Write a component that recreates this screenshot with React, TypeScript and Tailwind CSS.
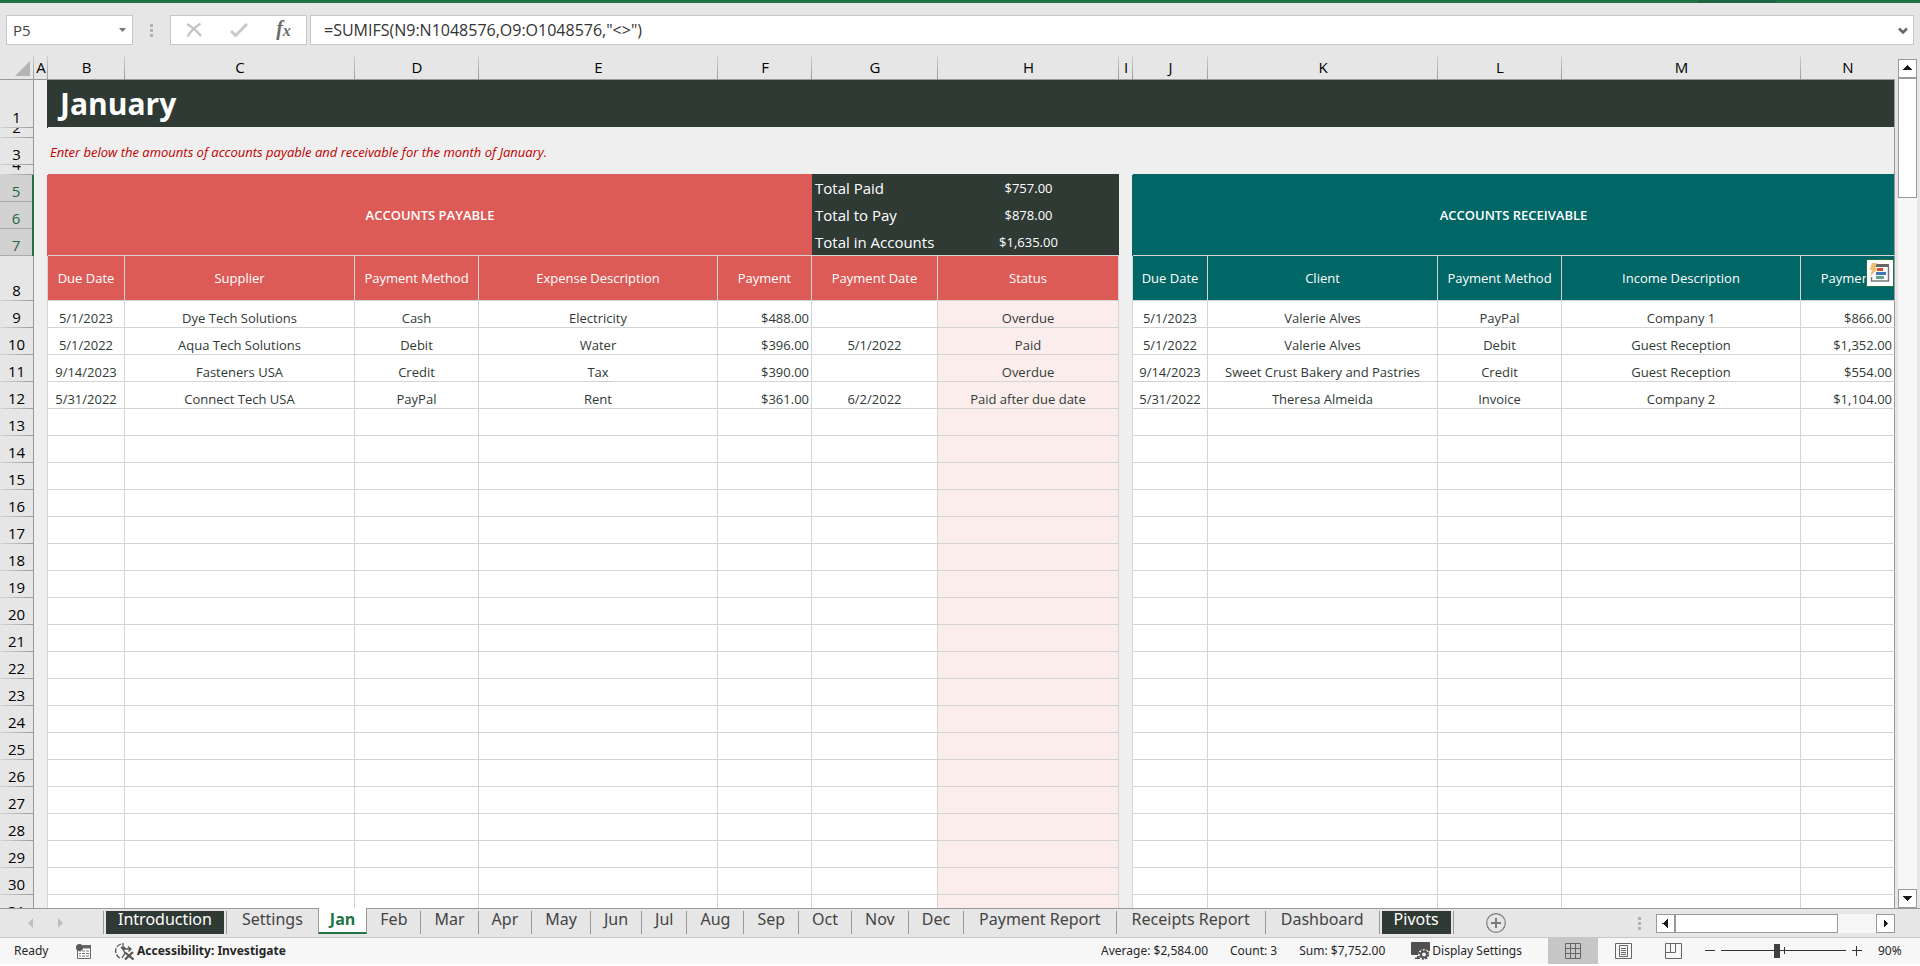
import React, { useState } from 'react';

type Cells = string[];

const columns = [
  { id: 'A', width: 'w-[14px]' },
  { id: 'B', width: 'w-[77px]' },
  { id: 'C', width: 'w-[230px]' },
  { id: 'D', width: 'w-[124px]' },
  { id: 'E', width: 'w-[239px]' },
  { id: 'F', width: 'w-[94px]' },
  { id: 'G', width: 'w-[126px]' },
  { id: 'H', width: 'w-[181px]' },
  { id: 'I', width: 'w-[14px]' },
  { id: 'J', width: 'w-[75px]' },
  { id: 'K', width: 'w-[230px]' },
  { id: 'L', width: 'w-[124px]' },
  { id: 'M', width: 'w-[239px]' },
  { id: 'N', width: '' },
];

const payableHead = ['Due Date', 'Supplier', 'Payment Method', 'Expense Description', 'Payment', 'Payment Date', 'Status'];
const receivableHead = ['Due Date', 'Client', 'Payment Method', 'Income Description', 'Payment'];

const payable: Cells[] = [
  ['5/1/2023', 'Dye Tech Solutions', 'Cash', 'Electricity', '$488.00', '', 'Overdue'],
  ['5/1/2022', 'Aqua Tech Solutions', 'Debit', 'Water', '$396.00', '5/1/2022', 'Paid'],
  ['9/14/2023', 'Fasteners USA', 'Credit', 'Tax', '$390.00', '', 'Overdue'],
  ['5/31/2022', 'Connect Tech USA', 'PayPal', 'Rent', '$361.00', '6/2/2022', 'Paid after due date'],
];

const receivable: Cells[] = [
  ['5/1/2023', 'Valerie Alves', 'PayPal', 'Company 1', '$866.00'],
  ['5/1/2022', 'Valerie Alves', 'Debit', 'Guest Reception', '$1,352.00'],
  ['9/14/2023', 'Sweet Crust Bakery and Pastries', 'Credit', 'Guest Reception', '$554.00'],
  ['5/31/2022', 'Theresa Almeida', 'Invoice', 'Company 2', '$1,104.00'],
];

const emptyPayable: Cells = ['', '', '', '', '', '', ''];
const emptyReceivable: Cells = ['', '', '', '', ''];

const tabs = [
  'Introduction', 'Settings', 'Jan', 'Feb', 'Mar', 'Apr', 'May', 'Jun', 'Jul', 'Aug', 'Sep',
  'Oct', 'Nov', 'Dec', 'Payment Report', 'Receipts Report', 'Dashboard', 'Pivots',
];
const darkTabs = ['Introduction', 'Pivots'];
const wideTabs = ['Settings', 'Payment Report', 'Receipts Report', 'Dashboard'];

const RowHead = ({ n, h, selected = false }: { n: number; h: string; selected?: boolean }) => (
  <th
    scope="row"
    className={`relative p-0 align-bottom font-normal text-[15px] leading-5 ${h} ${
      selected ? 'bg-[#d2d2d2] text-[#1e6a41] border-r-2 border-[#217346]' : 'bg-[#e6e6e6] text-black border-r border-[#999999]'
    }`}
  >
    <div className={`flex items-end justify-center overflow-hidden pb-px ${h}`}>{n}</div>
    <div className={`absolute bottom-0 left-0 right-0 h-px ${selected ? 'bg-[#ababab]' : 'bg-linear-to-r from-[#d8d8d8] to-[#999999]'}`} />
  </th>
);

const Dots = () => (
  <div className="flex flex-col gap-[2px]">
    <i className="size-[3px] bg-[#b1b1b1]" />
    <i className="size-[3px] bg-[#b1b1b1]" />
    <i className="size-[3px] bg-[#b1b1b1]" />
  </div>
);

const arrows = {
  up: 'M5 11h9L9.500 6z',
  down: 'M5 7h9l-4.500 5z',
  left: 'M11.500 5v9L6.500 9.500z',
  right: 'M7.500 5v9l5-4.500z',
};

const ScrollButton = ({ dir }: { dir: keyof typeof arrows }) => (
  <button aria-label={`Scroll ${dir}`} className="size-[19px] shrink-0 bg-white outline outline-1 -outline-offset-1 outline-[#999999]">
    <svg viewBox="0 0 19 19" className="size-[19px]" shapeRendering="crispEdges">
      <path d={arrows[dir]} fill="#1a1a1a" />
    </svg>
  </button>
);

const FormulaBar = () => (
  <div className="flex items-center gap-[3px] px-[6px] pt-[12px] pb-[10px] text-[#444444]">
    <div className="flex h-[30px] w-[127px] items-center border border-[#c6c6c6] bg-white">
      <input aria-label="Name Box" defaultValue="P5" className="min-w-0 flex-1 bg-transparent pl-[6px] text-[15px] outline-none" />
      <button aria-label="Open name list" className="flex h-full w-5 items-center justify-center">
        <svg viewBox="0 0 7 4" className="h-[4px] w-[7px]"><path d="M0 0h7L3.500 4z" fill="#73777b" /></svg>
      </button>
    </div>
    <div className="flex w-[31px] justify-center"><Dots /></div>
    <div className="flex h-[30px] w-[137px] items-center border border-[#c6c6c6] bg-white">
      <button aria-label="Cancel" className="flex flex-1 justify-center">
        <svg viewBox="0 0 16 14" className="h-[14px] w-4"><path d="M1 1c5 3 10 7 14 12M14.500.500C9 4 4 9 1.500 13.500" fill="none" stroke="#c4c4c4" strokeWidth="2.200" /></svg>
      </button>
      <button aria-label="Enter" className="flex flex-1 justify-center">
        <svg viewBox="0 0 18 14" className="h-[14px] w-[18px]"><path d="M1 8l4.500 4.500L17 1" fill="none" stroke="#c9c9c9" strokeWidth="3" /></svg>
      </button>
      <button aria-label="Insert Function" className="flex flex-1 justify-center pb-[2px] font-['Liberation_Serif',serif] text-[20px] leading-6 font-bold italic text-[#6b6b6b]">
        f<span className="pt-[3px] text-[16px]">x</span>
      </button>
    </div>
    <div className="flex h-[30px] min-w-0 flex-1 items-center border border-[#c6c6c6] bg-white">
      <input
        aria-label="Formula Bar"
        defaultValue={'=SUMIFS(N9:N1048576,O9:O1048576,"<>")'}
        className="min-w-0 flex-1 bg-transparent pl-[13px] text-[16px] text-[#333333] outline-none"
      />
      <button aria-label="Expand Formula Bar" className="flex h-full w-5 items-center justify-center">
        <svg viewBox="0 0 10 7" className="h-[7px] w-[10px]"><path d="M1 1.500l4 4 4-4" fill="none" stroke="#666666" strokeWidth="2.500" /></svg>
      </button>
    </div>
  </div>
);

const QuickAnalysis = () => (
  <button aria-label="Quick Analysis" className="absolute top-[3px] right-0 size-[28px] border border-[#217346] bg-white">
    <svg viewBox="0 0 26 26" className="size-[26px]">
      <path d="M8 4h14v3H8z" fill="#666666" />
      <path d="M21.500 6v15h-17v-4" fill="none" stroke="#777777" strokeWidth="1.500" />
      <path d="M10 8h6v3h-6z" fill="#d6492a" />
      <path d="M9 12h10v3H9z" fill="#3f79b5" />
      <path d="M9 16h8v3H9z" fill="#62a58c" />
      <path d="M5 3h5L8 8h3l-8 9 2-7H2.500z" fill="#ecc06c" />
    </svg>
  </button>
);

const Sheet = () => (
  <table className="w-full table-fixed border-separate border-spacing-0 text-[13px] leading-[18px] text-[#303a35]">
    <colgroup>
      <col className="w-[34px]" />
      {columns.map((c) => <col key={c.id} className={c.width} />)}
    </colgroup>
    <thead>
      <tr className="h-[25px] text-[15px] leading-5 text-black">
        <th className="relative border-b border-[#999999] p-0">
          <svg viewBox="0 0 15 15" className="absolute right-[4px] bottom-[3px] size-[15px]"><path d="M15 0v15H0z" fill="#b4b4b4" /></svg>
          <div className="absolute right-0 bottom-0 h-[23px] w-px bg-linear-to-b from-[#d0d0d0] to-[#999999]" />
        </th>
        {columns.map((c) => (
          <th key={c.id} scope="col" className="relative border-b border-[#999999] p-0 font-normal">
            {c.id}
            {c.id !== 'N' && <div className="absolute right-0 bottom-0 h-[23px] w-px bg-linear-to-b from-[#d0d0d0] to-[#999999]" />}
          </th>
        ))}
      </tr>
    </thead>
    <tbody>
      <tr>
        <RowHead n={1} h="h-[48px]" />
        <td className="border-r border-[#303a35] p-0" />
        <td colSpan={13} className="border-r border-b border-r-[#999999] border-b-[#efefef] bg-[#303a35] p-0 pl-3">
          <h1 className="text-[30px] leading-10 font-bold text-white">January</h1>
        </td>
      </tr>
      <tr>
        <RowHead n={2} h="h-[10px]" />
        <td colSpan={14} className="border-r border-[#999999] p-0" />
      </tr>
      <tr>
        <RowHead n={3} h="h-[27px]" />
        <td />
        <td colSpan={13} className="border-r border-[#999999] p-0 pl-[2px] text-[13px] italic text-[#c00000]">
          Enter below the amounts of accounts payable and receivable for the month of January.
        </td>
      </tr>
      <tr>
        <RowHead n={4} h="h-[10px]" />
        <td />
        <td colSpan={5} className="border-b border-[#dc5b57] p-0" />
        <td colSpan={2} className="border-b border-[#303a35] p-0" />
        <td />
        <td colSpan={5} className="border-r border-b border-r-[#999999] border-b-[#006666] p-0" />
      </tr>
      {[
        ['Total Paid', '$757.00'],
        ['Total to Pay', '$878.00'],
        ['Total in Accounts', '$1,635.00'],
      ].map(([label, value], i) => (
        <tr key={label} className="text-white">
          <RowHead n={5 + i} h="h-[27px]" selected />
          <td className="border-r border-[#dc5b57] p-0" />
          {i === 0 && (
            <td rowSpan={3} colSpan={5} className="border-b border-[#d4d4d4] bg-[#dc5b57] p-0 text-center font-semibold">
              ACCOUNTS PAYABLE
            </td>
          )}
          <td className={`border-b bg-[#303a35] p-0 pl-[3px] text-[15px] leading-5 whitespace-nowrap ${i === 2 ? 'border-[#d4d4d4]' : 'border-[#303a35]'}`}>{label}</td>
          <td className={`border-b bg-[#303a35] p-0 text-center ${i === 2 ? 'border-[#d4d4d4]' : 'border-[#303a35]'}`}>{value}</td>
          <td className="border-r border-[#006666] p-0" />
          {i === 0 && (
            <td rowSpan={3} colSpan={5} className="border-r border-b border-r-[#999999] border-b-[#d4d4d4] bg-[#006666] p-0 text-center font-semibold">
              ACCOUNTS RECEIVABLE
            </td>
          )}
        </tr>
      ))}
      <tr className="text-white">
        <RowHead n={8} h="h-[45px]" />
        <td className="border-r border-[#d4d4d4] p-0" />
        {payableHead.map((t) => (
          <td key={t} className="border-r border-b border-[#d4d4d4] bg-[#dc5b57] p-0 text-center whitespace-nowrap">{t}</td>
        ))}
        <td className="border-r border-[#d4d4d4] p-0" />
        {receivableHead.map((t, i) => (
          <td key={t} className={`relative border-r border-b border-b-[#d4d4d4] bg-[#006666] p-0 text-center whitespace-nowrap ${i === 4 ? 'border-r-[#999999]' : 'border-r-[#d4d4d4]'}`}>
            {t}
            {i === 4 && <QuickAnalysis />}
          </td>
        ))}
      </tr>
      {Array.from({ length: 40 }, (_, r) => (
        <tr key={r}>
          <RowHead n={9 + r} h="h-[27px]" />
          <td className="border-r border-[#d4d4d4] p-0" />
          {(payable[r] ?? emptyPayable).map((t, i) => (
            <td
              key={i}
              className={`border-r border-b border-[#d4d4d4] p-0 align-bottom whitespace-nowrap ${i === 4 ? 'pr-[2px] text-right' : 'text-center'} ${
                i === 6 ? 'bg-[#fceded]' : 'bg-white'
              }`}
            >
              {t}
            </td>
          ))}
          <td className="border-r border-[#d4d4d4] p-0" />
          {(receivable[r] ?? emptyReceivable).map((t, i) => (
            <td
              key={i}
              className={`border-r border-b border-b-[#d4d4d4] bg-white p-0 align-bottom whitespace-nowrap ${
                i === 4 ? 'border-r-[#999999] pr-[2px] text-right' : 'border-r-[#d4d4d4] text-center'
              }`}
            >
              {t}
            </td>
          ))}
        </tr>
      ))}
    </tbody>
  </table>
);

const SheetTabs = () => {
  const [active, setActive] = useState('Jan');

  return (
    <div className="flex h-[30px] shrink-0 border-b border-[#c6c6c6] font-['Noto_Sans',sans-serif] text-[16px] leading-4 text-[#444444]">
      <div className="flex w-[103px] shrink-0 items-center gap-[25px] border-t border-[#999999] pl-[28px]">
        <button aria-label="Previous sheet"><svg viewBox="0 0 5 10" className="h-[10px] w-[5px]"><path d="M5 0v10L0 5z" fill="#bdbdbd" /></svg></button>
        <button aria-label="Next sheet"><svg viewBox="0 0 5 10" className="h-[10px] w-[5px]"><path d="M0 0v10l5-5z" fill="#bdbdbd" /></svg></button>
      </div>
      {tabs.map((t, i) =>
        t === active ? (
          <button key={t} className="h-[26px] border-x border-b-2 border-x-[#999999] border-b-[#217346] bg-white px-[11px] pb-[3px] font-['Open_Sans',sans-serif] font-bold text-[#217346]">
            {t}
          </button>
        ) : (
          <div key={t} className="border-t border-[#999999] pt-[2px]">
            <div className={`flex h-[23px] items-start ${tabs[i + 1] === active ? '' : 'border-r border-[#999999]'} ${i === 0 ? 'border-l' : ''}`}>
              <button
                onClick={() => setActive(t)}
                className={`h-[23px] pb-[7px] whitespace-nowrap ${
                  darkTabs.includes(t) ? 'mx-[2px] bg-[#303a35] px-3 text-white' : wideTabs.includes(t) ? 'px-[15px]' : 'px-[13px]'
                }`}
              >
                {t}
              </button>
            </div>
          </div>
        ),
      )}
      <div className="flex min-w-0 flex-1 items-center border-t border-[#999999] pl-8">
        <button aria-label="New sheet">
          <svg viewBox="0 0 20 20" className="size-5" fill="none" stroke="#7a7a7a">
            <circle cx="10" cy="10" r="9.300" strokeWidth="1.200" />
            <path d="M10 5v10M5 10h10" strokeWidth="2" />
          </svg>
        </button>
      </div>
      <div className="flex items-center border-t border-[#999999] pr-[25px]">
        <Dots />
        <div className="ml-[15px] flex h-[19px] w-[239px] bg-[#f6f6f6]">
          <ScrollButton dir="left" />
          <div className="w-[163px] border border-[#999999] bg-white" />
          <div className="flex-1" />
          <ScrollButton dir="right" />
        </div>
      </div>
    </div>
  );
};

const StatusBar = () => (
  <div className="mb-[2px] flex h-[26px] shrink-0 items-center bg-[#f7f7f7] pl-[14px] font-['Noto_Sans',sans-serif] text-[12px] leading-4 text-[#262626]">
    <span className="w-[62px]">Ready</span>
    <button aria-label="Macro recording" className="mr-6">
      <svg viewBox="0 0 15 15" className="size-[15px]">
        <path d="M1.500 5v9.500h13V2H6" fill="white" stroke="#666666" />
        <path d="M7 1h8v3.500H6z" fill="#666666" />
        <circle cx="3.500" cy="3.500" r="3.500" fill="#595959" />
        <path d="M3 7h2m1 0h3m1 0h3M3 9.500h2m1 0h3m1 0h3M3 12h2m1 0h3m1 0h3" stroke="#777777" />
      </svg>
    </button>
    <button className="flex items-center gap-[3px] font-bold">
      <svg viewBox="0 0 19 17" className="h-[17px] w-[19px]" fill="none" stroke="#555555">
        <path d="M6 1A7.500 7.500 0 0 0 5 15" strokeWidth="1.300" strokeDasharray="5 1.500" />
        <path d="M8 0v6M6 4l2 2.500L10 4M8 6h8M13 3.500L16 6l-2.500 2.500M8 6l2 4-3 5" strokeWidth="1.300" />
        <path d="M10 9.500l8.500 7M18 9l-8 7.500" strokeWidth="2.200" />
      </svg>
      Accessibility: Investigate
    </button>
    <div className="flex-1" />
    <span className="mr-[22px]">Average: $2,584.00</span>
    <span className="mr-[22px]">Count: 3</span>
    <span className="mr-[26px]">Sum: $7,752.00</span>
    <button className="mr-[26px] flex items-center gap-[2px]">
      <svg viewBox="0 0 19 18" className="h-[18px] w-[19px]">
        <path d="M1 0h17a1 1 0 0 1 1 1v8H8v4H1a1 1 0 0 1-1-1V1a1 1 0 0 1 1-1zM6 14h3v3H4v-1.500h2z" fill="#505050" />
        <circle cx="13" cy="12.500" r="5.500" fill="#f7f7f7" />
        <circle cx="13" cy="12.500" r="3" fill="none" stroke="#505050" strokeWidth="2" />
        <circle cx="13" cy="12.500" r="4.500" fill="none" stroke="#505050" strokeWidth="1.600" strokeDasharray="2 1.530" />
      </svg>
      Display Settings
    </button>
    <button aria-label="Normal" className="flex h-[26px] w-[50px] items-center justify-center bg-[#c6c6c6]">
      <svg viewBox="0 0 16 16" className="size-4" fill="none" stroke="#666666">
        <path d="M.500.500h15v15H.500zM.500 5.500h15M.500 10.500h15M5.500.500v15M10.500.500v15" />
      </svg>
    </button>
    <button aria-label="Page Layout" className="flex w-[50px] justify-center">
      <svg viewBox="0 0 17 16" className="h-4 w-[17px]" fill="none" stroke="#666666">
        <path d="M.500.500h16v15H.500zM4.500 2.500h8v11h-8zM6 5.500h5M6 7.500h5M6 9.500h5M6 11.500h5" />
      </svg>
    </button>
    <button aria-label="Page Break Preview" className="mr-[7px] flex w-[50px] justify-center">
      <svg viewBox="0 0 17 16" className="h-4 w-[17px]" fill="none" stroke="#666666">
        <path d="M.500.500h16v15H.500zM.500 9.500h10v-9M5.500.500v9" />
      </svg>
    </button>
    <button aria-label="Zoom out" className="mr-[6px]">
      <svg viewBox="0 0 10 10" className="size-[10px]"><path d="M0 4.500h10" stroke="#333333" /></svg>
    </button>
    <div className="relative mr-[6px] flex h-[14px] w-[125px] items-center">
      <div className="absolute right-0 left-0 top-[6px] h-px bg-[#333333]" />
      <div className="absolute top-[3px] left-1/2 h-[7px] w-px bg-[#333333]" />
      <input
        type="range"
        aria-label="Zoom level"
        min={10}
        max={190}
        defaultValue={90}
        className="relative h-[14px] w-full appearance-none bg-transparent [&::-webkit-slider-thumb]:h-[14px] [&::-webkit-slider-thumb]:w-[6px] [&::-webkit-slider-thumb]:appearance-none [&::-webkit-slider-thumb]:bg-[#404040]"
      />
    </div>
    <button aria-label="Zoom in" className="mr-4">
      <svg viewBox="0 0 10 10" className="size-[10px]"><path d="M0 4.500h10M4.500 0v10" stroke="#333333" /></svg>
    </button>
    <button className="w-[42px] text-left">90%</button>
  </div>
);

export default function App() {
  return (
    <div className="flex h-screen flex-col overflow-hidden bg-white font-['Open_Sans',sans-serif]">
      <div className="flex min-h-0 flex-1 flex-col bg-[#e6e6e6]">
        <div className="h-[3px] shrink-0 bg-[#217346]">
          <div className="ml-auto mr-[144px] h-[3px] w-[78px] bg-[#1d6340]" />
        </div>
        <FormulaBar />
        <div className="flex min-h-0 flex-1">
          <div className="min-w-0 flex-1 overflow-hidden">
            <div className="bg-linear-to-b from-[#e6e6e6] from-[25px] to-[#efefef] to-[25px]">
              <Sheet />
            </div>
          </div>
          <div className="flex w-[25px] shrink-0 pt-1 pl-[3px]">
            <div className="flex w-[19px] flex-col bg-[#f6f6f6]">
              <ScrollButton dir="up" />
              <div className="h-[120px] border border-[#999999] bg-white" />
              <div className="flex-1" />
              <ScrollButton dir="down" />
            </div>
          </div>
        </div>
        <SheetTabs />
      </div>
      <StatusBar />
    </div>
  );
}
